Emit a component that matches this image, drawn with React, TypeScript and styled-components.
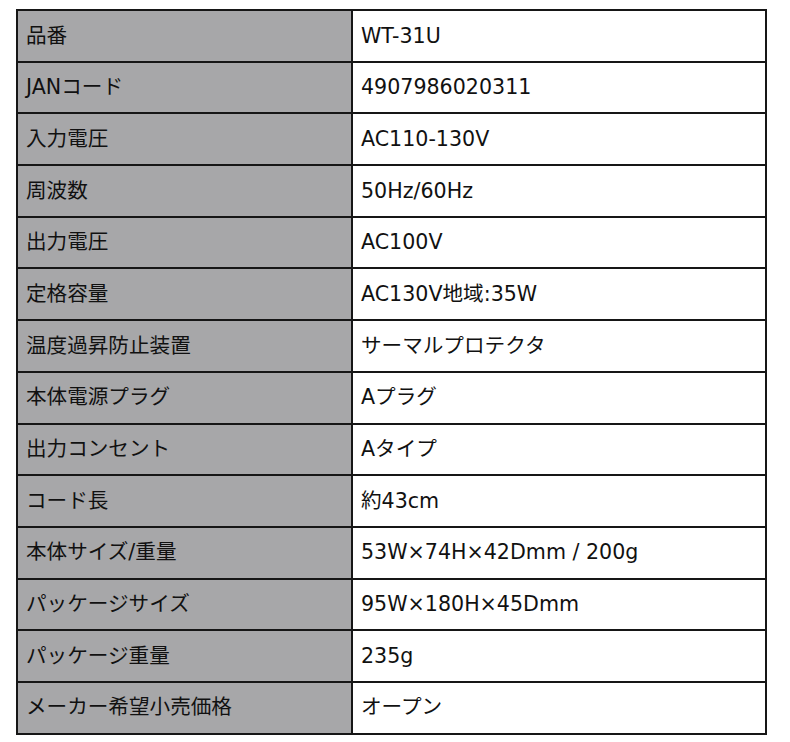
import React from "react";
import styled, { createGlobalStyle } from "styled-components";

const GlobalStyle = createGlobalStyle`
  html, body {
    margin: 0;
    padding: 0;
    background: #ffffff;
  }
  body {
    font-family: "DejaVu Sans", "Noto Sans CJK JP", sans-serif;
    color: #111111;
  }
`;

const PageBox = styled.div`
  padding: 9px 0 0 16px;
  width: 790px;
  height: 742px;
  box-sizing: border-box;
`;

const SpecTable = styled.table`
  border-collapse: collapse;
  width: 751px;
  table-layout: fixed;
`;

const LabelCell = styled.th`
  box-sizing: border-box;
  width: 335px;
  height: 51.7px;
  padding: 0 0 0 8px;
  background: #a7a7a9;
  border: 2px solid #161616;
  text-align: left;
  font-weight: normal;
  font-size: 20.6px;
  line-height: 1;
  vertical-align: middle;
  white-space: nowrap;
`;

const ValueCell = styled.td`
  box-sizing: border-box;
  height: 51.7px;
  padding: 0 0 0 8px;
  background: #ffffff;
  border: 2px solid #161616;
  font-size: 20.6px;
  line-height: 1;
  vertical-align: middle;
  white-space: nowrap;
`;

const specs: [string, string][] = [
  ["品番", "WT-31U"],
  ["JANコード", "4907986020311"],
  ["入力電圧", "AC110-130V"],
  ["周波数", "50Hz/60Hz"],
  ["出力電圧", "AC100V"],
  ["定格容量", "AC130V地域:35W"],
  ["温度過昇防止装置", "サーマルプロテクタ"],
  ["本体電源プラグ", "Aプラグ"],
  ["出力コンセント", "Aタイプ"],
  ["コード長", "約43cm"],
  ["本体サイズ/重量", "53W×74H×42Dmm / 200g"],
  ["パッケージサイズ", "95W×180H×45Dmm"],
  ["パッケージ重量", "235g"],
  ["メーカー希望小売価格", "オープン"],
];

export default function App() {
  return (
    <>
      <GlobalStyle />
      <PageBox>
        <SpecTable>
          <tbody>
            {specs.map(([label, value]) => (
              <tr key={label}>
                <LabelCell scope="row">{label}</LabelCell>
                <ValueCell>{value}</ValueCell>
              </tr>
            ))}
          </tbody>
        </SpecTable>
      </PageBox>
    </>
  );
}
